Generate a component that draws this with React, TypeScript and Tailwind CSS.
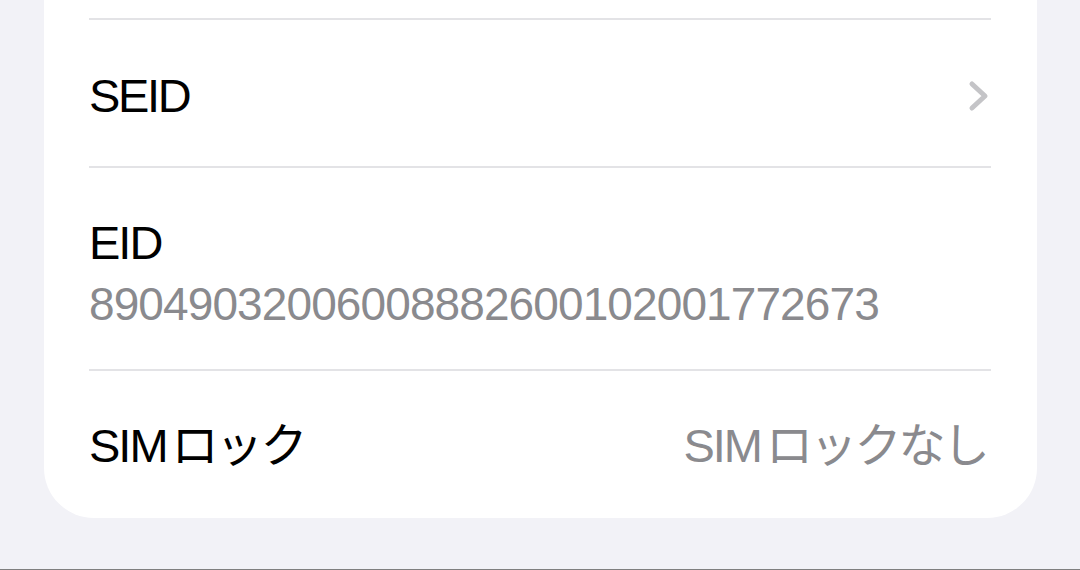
import React from "react";

const font = { fontFamily: '"Liberation Sans", "Noto Sans CJK JP", sans-serif' };

function Divider() {
  return <div className="h-[2px] bg-[#e3e3e6]" />;
}

export default function App() {
  return (
    <div
      className="w-[1080px] h-[570px] bg-[#f2f2f7] flex flex-col overflow-hidden"
      style={font}
    >
      <div className="flex-1 px-[44px] pr-[43px]">
        <div className="bg-white rounded-b-[50px] pt-[18px] pl-[45px] pr-[46px]">
          <Divider />
          <div className="flex items-center justify-between pt-[52px] pb-[47px]">
            <span className="text-[47px] leading-[47px] tracking-[-2.3px] text-black">SEID</span>
            <svg width="22" height="32" viewBox="0 0 22 32" className="mr-[1px]">
              <path
                d="M4 4 L17 16 L4 28"
                fill="none"
                stroke="#c4c4c7"
                strokeWidth="5"
                strokeLinecap="round"
                strokeLinejoin="round"
              />
            </svg>
          </div>
          <Divider />
          <div className="flex flex-col pt-[51px] pb-[41px]">
            <span className="text-[47px] leading-[47px] tracking-[-2px] text-black">EID</span>
            <span className="mt-[15px] text-[46px] leading-[47px] tracking-[-0.9px] text-[#8a8a8e]">
              89049032006008882600102001772673
            </span>
          </div>
          <Divider />
          <div className="flex items-center justify-between pt-[51px] pb-[49px]">
            <span className="text-[47px] leading-[47px] tracking-[-2px] text-black">
              SIM<span className="ml-[5px] tracking-[-2.5px]">ロック</span>
            </span>
            <span className="text-[47px] leading-[47px] tracking-[-2px] text-[#8a8a8e] pr-[4px]">
              SIM<span className="ml-[5px] tracking-[-2.8px]">ロックなし</span>
            </span>
          </div>
        </div>
      </div>
      <div className="h-[1px] bg-[#7f7f7f]" />
    </div>
  );
}
